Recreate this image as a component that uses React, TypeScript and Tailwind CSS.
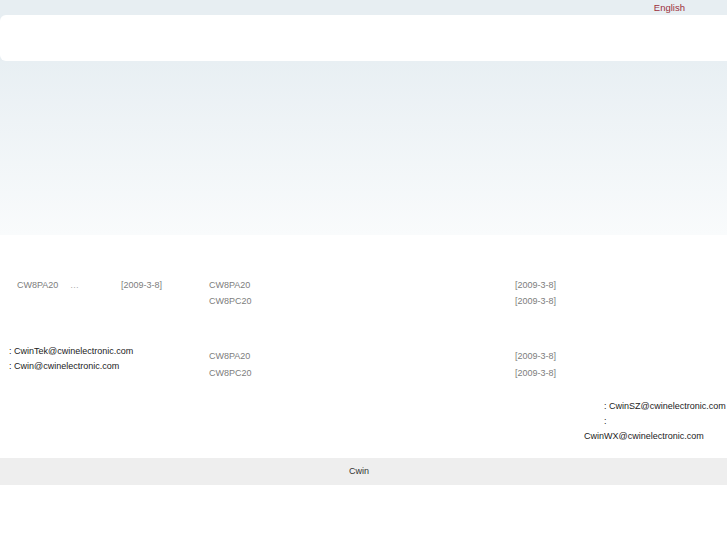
import React from 'react';

const products = [
  { name: 'CW8PA20', date: '[2009-3-8]' },
  { name: 'CW8PC20', date: '[2009-3-8]' },
];

// list of product rows: name column, then date
function ProductList({ rowH }: { rowH: string }) {
  return (
    <div className="flex flex-col">
      {products.map((p) => (
        <div key={p.name} className={`flex ${rowH}`}>
          <span className="w-[306px]">{p.name}</span>
          <span>{p.date}</span>
        </div>
      ))}
    </div>
  );
}

export default function App() {
  return (
    <div className="min-h-[545px] bg-white font-['Liberation_Sans',Arial,sans-serif] text-[9px]">
      {/* top bar */}
      <div className="h-[15px] bg-[#e7eef2] flex justify-end items-center pr-[42px]">
        <span className="text-[9.5px] leading-[15px] text-[#9c2f3b]">English</span>
      </div>
      <div className="bg-[#e7eef2]">
        <div className="h-[46px] bg-white rounded-l-[6px]" />
      </div>
      <div className="h-[174px] bg-gradient-to-b from-[#e8eff3] to-[#f9fbfc]" />

      <div className="h-[42px]" />

      {/* section 1 */}
      <div className="flex text-[#7d7d7d]">
        <div className="w-[209px] flex leading-[16px]">
          <span className="w-[70px] pl-[17px]">CW8PA20</span>
          <span className="w-[51px] text-[#aaa]">…</span>
          <span>[2009-3-8]</span>
        </div>
        <div className="leading-[16px]">
          <ProductList rowH="h-[16px]" />
        </div>
      </div>

      {/* section 2 */}
      <div className="flex mt-[34px]">
        <div className="w-[209px] pt-[1px] pl-[9px] leading-[15px] text-[#222]">
          <div>: CwinTek@cwinelectronic.com</div>
          <div>: Cwin@cwinelectronic.com</div>
        </div>
        <div className="mt-[5px] leading-[17px] text-[#7d7d7d]">
          <ProductList rowH="h-[17px]" />
        </div>
      </div>

      {/* section 3 */}
      <div className="flex justify-end mt-[17px]">
        <div className="w-[143px] leading-[15px] text-[#222]">
          <div className="pl-[20px]">: CwinSZ@cwinelectronic.com</div>
          <div className="pl-[20px]">:</div>
          <div>CwinWX@cwinelectronic.com</div>
        </div>
      </div>

      {/* footer */}
      <div className="mt-[14px] h-[27px] bg-[#eeeeee] flex items-center justify-center text-[#333]">
        <span className="pr-[9px]">Cwin</span>
      </div>
    </div>
  );
}
